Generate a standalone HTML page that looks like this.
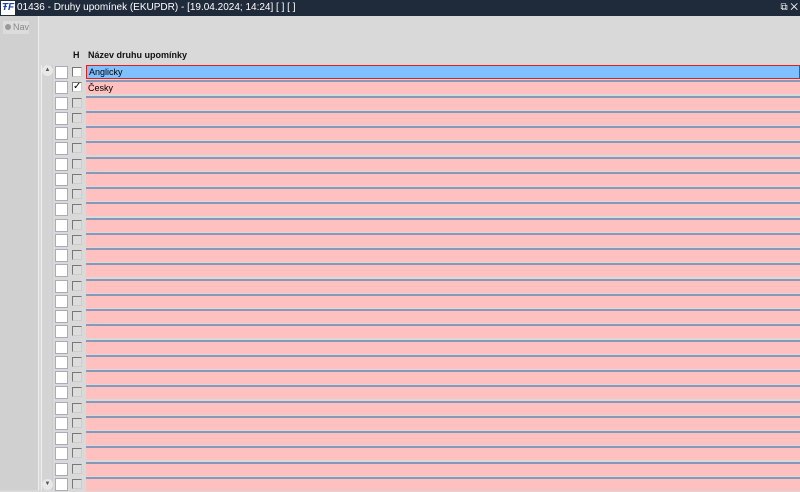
<!DOCTYPE html><html><head><style>
*{margin:0;padding:0;box-sizing:border-box}
body{width:800px;height:490px;overflow:hidden;background:#d9d9d9;font-family:"Liberation Sans",sans-serif;position:relative}
.t{position:absolute;left:0;top:0;width:800px;height:16px;background:#1f2a3a;color:#fff;font-size:10px;line-height:16px;padding-left:17px}
.logo{position:absolute;left:1px;top:1px;width:14px;height:14px;background:#fff;color:#1a3fb0;font-size:10px;font-weight:bold;font-style:italic;line-height:14px;text-align:center}
.nav{position:absolute;left:0;top:16px;width:39px;height:474px;background:#d0d0d0;border-right:1px solid #eee}
.navb{position:absolute;left:3px;top:5px;width:26px;height:13px;background:#dcdcdc;font-size:9px;color:#888;line-height:13px;padding-left:10px}
.navb:before{content:"";position:absolute;left:2px;top:3px;width:6px;height:6px;border-radius:50%;background:#999}
.sb{position:absolute;left:41px;top:65px;width:12px;height:425px;background:#d4d4d4;border-left:1px solid #eee;border-right:1px solid #ccc}
.hd{position:absolute;top:50px;font-size:9px;font-weight:bold;color:#111}
.r{position:absolute;left:0;height:15px;width:800px}
.a{position:absolute;left:55px;top:1px;width:13px;height:13px;background:#fff;border:1px solid #aab}
.b{position:absolute;left:72px;top:2px;width:10px;height:10px;background:#ddd;border:1px solid #777;border-right-color:#ccc;border-bottom-color:#ccc}
.f{position:absolute;left:86px;top:0;width:714px;height:14px;background:#ffc0c0;border-top:2px solid #8898b8;font-size:9px;line-height:12px;padding-left:2px;color:#000}
</style></head><body>
<div class="t"><div class="logo">ŦF</div>01436 - Druhy upomínek (EKUPDR) - [19.04.2024; 14:24] [ ] [ ]<span style="position:absolute;right:2px;top:0">⧉ ✕</span></div>
<div class="nav"><div class="navb">Nav</div></div>
<div class="sb"><div style="position:absolute;left:0;top:0;width:11px;height:11px;border-radius:50%;background:#e8e8e8;font-size:6px;text-align:center;line-height:11px;color:#555">▲</div><div style="position:absolute;left:0;top:414px;width:11px;height:11px;border-radius:50%;background:#e8e8e8;font-size:6px;text-align:center;line-height:11px;color:#555">▼</div></div>
<div class="hd" style="left:73px">H</div>
<div class="hd" style="left:88px">Název druhu upomínky</div>
<div class="r" style="top:65px"><div class="a"></div><div class="b" style="background:#fff"></div><div class="f" style="background:#80c0ff;border:1px solid #e02020;line-height:12px">Anglicky</div></div>
<div class="r" style="top:80.25px"><div class="a"></div><div class="b" style="background:#fff;font-size:10px;line-height:8px;text-align:center">✓</div><div class="f">Česky</div></div>
<div class="r" style="top:95.5px"><div class="a"></div><div class="b"></div><div class="f"></div></div>
<div class="r" style="top:110.75px"><div class="a"></div><div class="b"></div><div class="f"></div></div>
<div class="r" style="top:126px"><div class="a"></div><div class="b"></div><div class="f"></div></div>
<div class="r" style="top:141.25px"><div class="a"></div><div class="b"></div><div class="f"></div></div>
<div class="r" style="top:156.5px"><div class="a"></div><div class="b"></div><div class="f"></div></div>
<div class="r" style="top:171.75px"><div class="a"></div><div class="b"></div><div class="f"></div></div>
<div class="r" style="top:187px"><div class="a"></div><div class="b"></div><div class="f"></div></div>
<div class="r" style="top:202.25px"><div class="a"></div><div class="b"></div><div class="f"></div></div>
<div class="r" style="top:217.5px"><div class="a"></div><div class="b"></div><div class="f"></div></div>
<div class="r" style="top:232.75px"><div class="a"></div><div class="b"></div><div class="f"></div></div>
<div class="r" style="top:248px"><div class="a"></div><div class="b"></div><div class="f"></div></div>
<div class="r" style="top:263.25px"><div class="a"></div><div class="b"></div><div class="f"></div></div>
<div class="r" style="top:278.5px"><div class="a"></div><div class="b"></div><div class="f"></div></div>
<div class="r" style="top:293.75px"><div class="a"></div><div class="b"></div><div class="f"></div></div>
<div class="r" style="top:309px"><div class="a"></div><div class="b"></div><div class="f"></div></div>
<div class="r" style="top:324.25px"><div class="a"></div><div class="b"></div><div class="f"></div></div>
<div class="r" style="top:339.5px"><div class="a"></div><div class="b"></div><div class="f"></div></div>
<div class="r" style="top:354.75px"><div class="a"></div><div class="b"></div><div class="f"></div></div>
<div class="r" style="top:370px"><div class="a"></div><div class="b"></div><div class="f"></div></div>
<div class="r" style="top:385.25px"><div class="a"></div><div class="b"></div><div class="f"></div></div>
<div class="r" style="top:400.5px"><div class="a"></div><div class="b"></div><div class="f"></div></div>
<div class="r" style="top:415.75px"><div class="a"></div><div class="b"></div><div class="f"></div></div>
<div class="r" style="top:431px"><div class="a"></div><div class="b"></div><div class="f"></div></div>
<div class="r" style="top:446.25px"><div class="a"></div><div class="b"></div><div class="f"></div></div>
<div class="r" style="top:461.5px"><div class="a"></div><div class="b"></div><div class="f"></div></div>
<div class="r" style="top:476.75px"><div class="a"></div><div class="b"></div><div class="f"></div></div>
</body></html>
